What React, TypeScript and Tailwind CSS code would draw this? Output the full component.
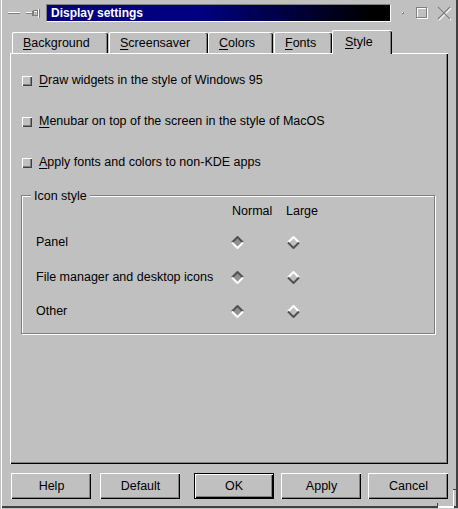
import React from 'react';

function Mnemonic({ text }: { text: string }) {
  return (
    <span>
      <span className="underline underline-offset-2">{text[0]}</span>
      {text.slice(1)}
    </span>
  );
}

function LeftControls() {
  return (
    <svg width="46" height="18" viewBox="0 0 46 18" className="shrink-0">
      <rect x="8" y="8" width="12" height="1" fill="#ffffff" />
      <rect x="8" y="9" width="12" height="1" fill="#808080" />
      <rect x="26" y="8" width="6" height="1" fill="#ffffff" />
      <rect x="26" y="9" width="6" height="1" fill="#808080" />
      <rect x="32" y="7" width="1" height="5" fill="#808080" />
      <rect x="33.5" y="6.5" width="4" height="5" fill="none" stroke="#808080" />
      <rect x="34" y="7" width="3" height="1" fill="#ffffff" />
      <rect x="38" y="5" width="1" height="9" fill="#ffffff" />
      <rect x="39" y="5" width="1" height="9" fill="#808080" />
    </svg>
  );
}

function RightControls() {
  return (
    <svg width="67" height="18" viewBox="0 0 67 18" className="shrink-0">
      <rect x="11" y="8" width="2" height="2" fill="#808080" />
      <rect x="11" y="8" width="1" height="1" fill="#ffffff" />
      <rect x="26.5" y="4.5" width="10" height="10" fill="none" stroke="#ffffff" />
      <rect x="25.5" y="3.5" width="10" height="10" fill="none" stroke="#808080" />
      <path d="M48 4 L60 16 M60 4 L48 16" stroke="#ffffff" strokeWidth="1.3" />
      <path d="M47 3 L59 15 M59 3 L47 15" stroke="#808080" strokeWidth="1.3" />
    </svg>
  );
}

function Tab({ label, width, selected }: { label: string; width: string; selected?: boolean }) {
  if (selected) {
    return (
      <div
        className={`relative z-10 -mb-px flex h-[24px] ${width} rounded-t-[2px] border-t border-l border-white bg-[#c0c0c0] pt-[4px] pl-[12px] leading-[15px] shadow-[inset_-1px_0_0_#000000,inset_-2px_0_0_#808080]`}
      >
        <Mnemonic text={label} />
      </div>
    );
  }
  return (
    <div
      className={`flex h-[21px] ${width} rounded-t-[2px] border-t border-l border-white pt-[3px] pl-[10px] leading-[15px] shadow-[inset_-1px_0_0_#000000,inset_-2px_0_0_#808080]`}
    >
      <Mnemonic text={label} />
    </div>
  );
}

function CheckRow({ label }: { label: string }) {
  return (
    <div className="flex h-[41px] items-center gap-[7px] pl-[11px]">
      <div className="h-[10px] w-[10px] border-t border-l border-white shadow-[inset_-1px_-1px_0_#404040,inset_-2px_-2px_0_#808080]" />
      <span className="leading-[15px]">
        <Mnemonic text={label} />
      </span>
    </div>
  );
}

function Diamond({ on }: { on: boolean }) {
  const top = on ? '#505050' : '#ffffff';
  const bottom = on ? '#ffffff' : '#505050';
  return (
    <svg width="13" height="13" viewBox="0 0 13 13">
      <polygon points="6.5,1.5 11.5,6.5 6.5,11.5 1.5,6.5" fill={on ? '#909090' : '#c0c0c0'} />
      <polyline points="1,6.5 6.5,1 12,6.5" fill="none" stroke={top} strokeWidth="2" />
      <polyline points="1,6.5 6.5,12 12,6.5" fill="none" stroke={bottom} strokeWidth="2" />
    </svg>
  );
}

function IconRow({ label, className }: { label: string; className?: string }) {
  return (
    <div className={`grid h-[34px] grid-cols-[195px_55px_1fr] items-center ${className ?? ''}`}>
      <span className="leading-[15px]">{label}</span>
      <div className="flex">
        <Diamond on />
      </div>
      <div className="ml-px flex">
        <Diamond on={false} />
      </div>
    </div>
  );
}

function Button({ label, isDefault }: { label: string; isDefault?: boolean }) {
  if (isDefault) {
    return (
      <button className="flex h-[26px] w-[80px] items-center justify-center border border-black leading-[15px] shadow-[inset_1px_1px_0_#ffffff,inset_-1px_-1px_0_#000000,inset_-2px_-2px_0_#808080]">
        {label}
      </button>
    );
  }
  return (
    <button className="flex h-[26px] w-[80px] items-center justify-center border-t border-l border-white leading-[15px] shadow-[inset_-1px_-1px_0_#000000,inset_-2px_-2px_0_#808080]">
      {label}
    </button>
  );
}

export default function App() {
  return (
    <div className="relative flex h-[509px] w-[458px] flex-col bg-[#c0c0c0] font-['Liberation_Sans',Arial,sans-serif] text-[12.5px] text-black shadow-[inset_1px_0_0_#c0c0c0,inset_2px_0_0_#ffffff,inset_0_-1px_0_#c0c0c0,inset_0_-3px_0_#404040,inset_-2px_0_0_#404040]">
      {/* title bar */}
      <div className="flex h-[22px] items-start pt-[4px]">
        <LeftControls />
        <div className="flex h-[18px] w-[345px] shrink-0 items-center border border-t-[#808080] border-l-[#808080] border-r-white border-b-white bg-[linear-gradient(to_right,#000080_45%,#000000_95%)] pl-[4px] text-[12px] leading-[15px] font-bold text-white">
          Display settings
        </div>
        <RightControls />
      </div>

      {/* tabs */}
      <div className="mt-[8px] flex h-[23px] items-end pl-[12px]">
        <Tab label="Background" width="w-[96px]" />
        <div className="w-px" />
        <Tab label="Screensaver" width="w-[99px]" />
        <Tab label="Colors" width="w-[65px]" />
        <div className="w-px" />
        <Tab label="Fonts" width="w-[58px]" />
        <Tab label="Style" width="w-[60px]" selected />
      </div>

      {/* page */}
      <div className="ml-[10px] flex h-[411px] w-[438px] flex-col border-t border-l border-white pt-[6px] shadow-[inset_-1px_-1px_0_#000000,inset_-2px_-2px_0_#808080]">
        <CheckRow label="Draw widgets in the style of Windows 95" />
        <CheckRow label="Menubar on top of the screen in the style of MacOS" />
        <CheckRow label="Apply fonts and colors to non-KDE apps" />

        <div className="relative mt-[12px] ml-[10px] h-[139px] w-[414px] border border-[#808080] shadow-[inset_1px_1px_0_#ffffff,1px_1px_0_#ffffff]">
          <span className="absolute top-[-8px] left-[9px] bg-[#c0c0c0] px-[3px] leading-[16px]">Icon style</span>
          <div className="flex flex-col pt-[7px] pl-[14px]">
            <div className="grid h-[16px] grid-cols-[195px_55px_1fr] items-center leading-[15px]">
              <span />
              <span className="pl-px">Normal</span>
              <span>Large</span>
            </div>
            <IconRow label="Panel" className="mt-[6px]" />
            <IconRow label="File manager and desktop icons" className="mt-[1px]" />
            <IconRow label="Other" />
          </div>
        </div>
      </div>

      {/* buttons */}
      <div className="mt-[9px] flex justify-between pr-[10px] pl-[11px]">
        <div className="flex gap-[9px]">
          <Button label="Help" />
          <Button label="Default" />
        </div>
        <div className="flex gap-[7px]">
          <Button label="OK" isDefault />
          <Button label="Apply" />
          <Button label="Cancel" />
        </div>
      </div>

      {/* resize corner */}
      <div className="absolute top-[489px] left-[453px] h-[1px] w-[5px] bg-[#404040]" />
      <div className="absolute top-[490px] left-[453px] h-[17px] w-[1px] bg-white" />
      <div className="absolute top-[506px] left-[438px] h-[2px] w-[16px] bg-white" />
      <div className="absolute top-[503px] left-[437px] h-[5px] w-[1px] bg-[#404040]" />
    </div>
  );
}
